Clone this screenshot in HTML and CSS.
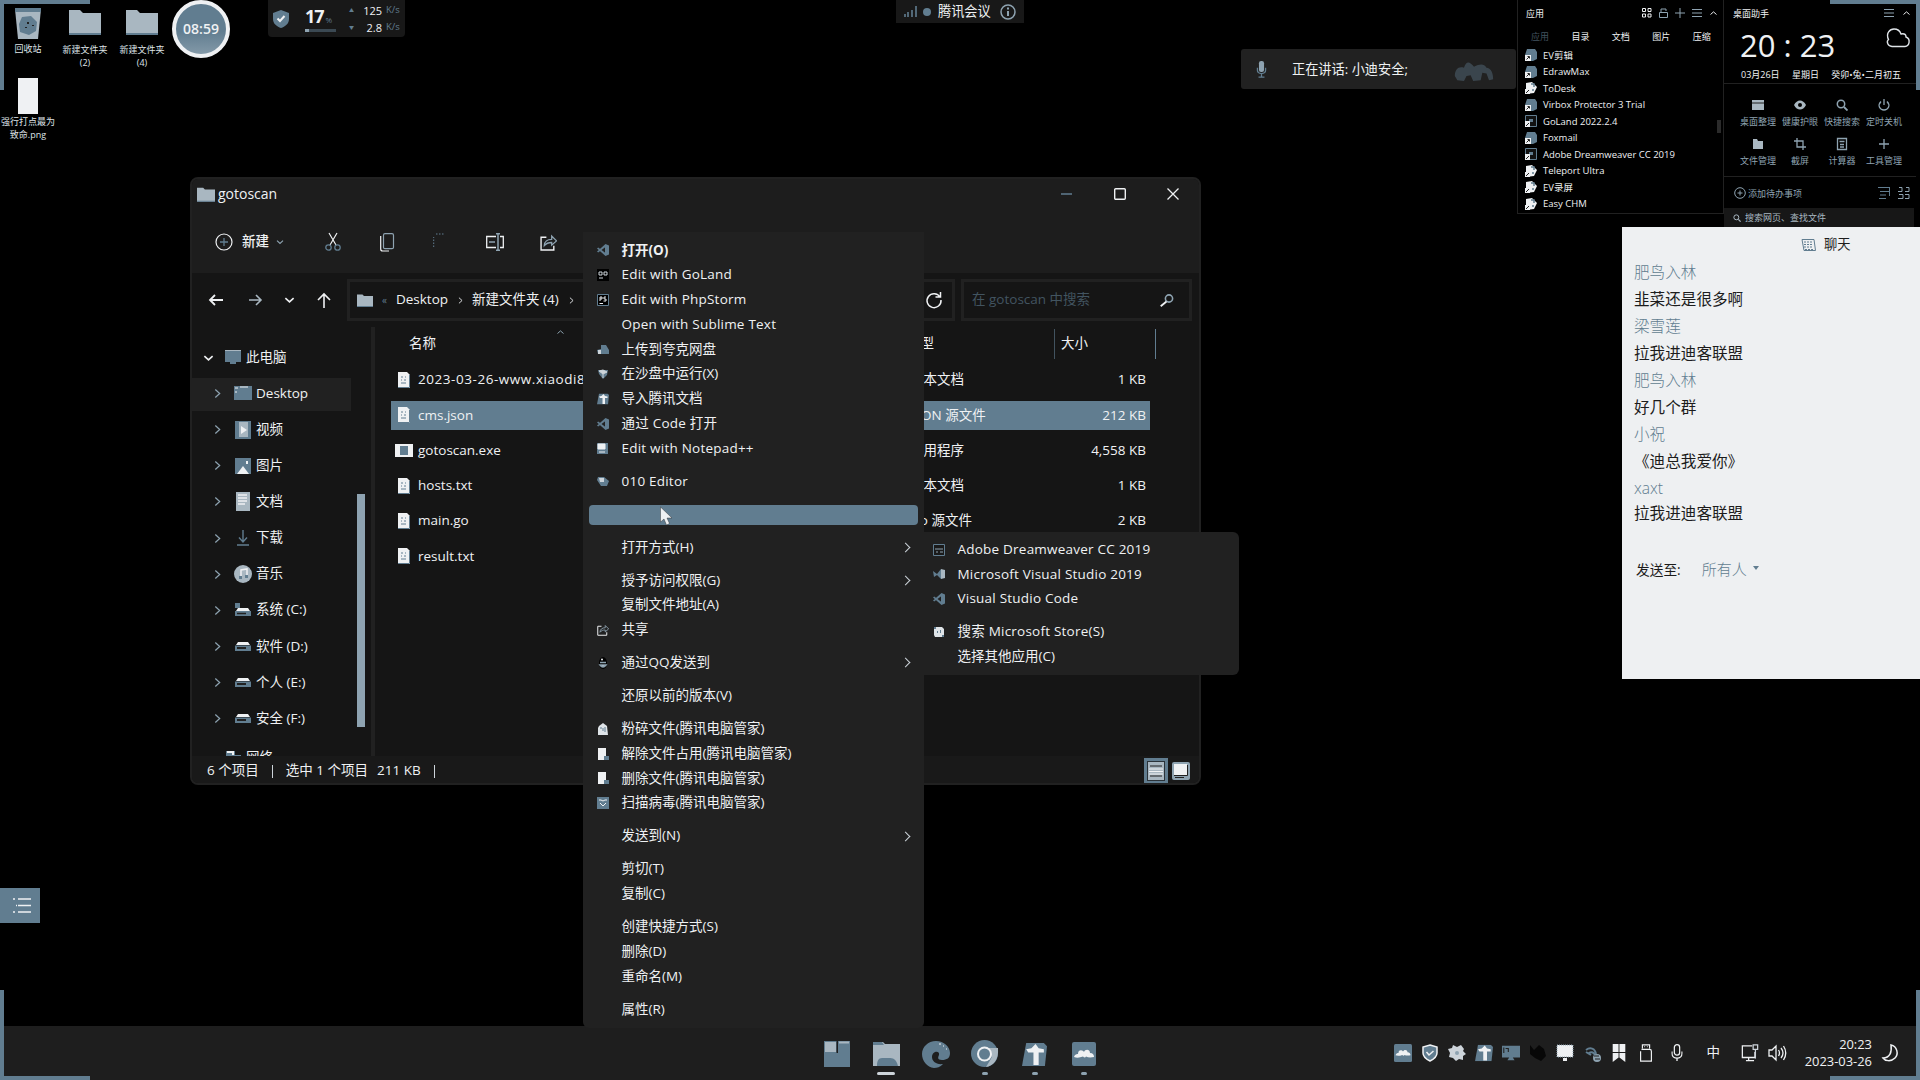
FILE: index.html
```html
<!DOCTYPE html>
<html lang="zh-CN">
<head>
<meta charset="utf-8">
<title>gotoscan</title>
<link rel="stylesheet" href="styles.css">
</head>
<body>
<svg class="defs" aria-hidden="true">
  <symbol id="folder" viewBox="0 0 32 26"><path d="M0 1h11l3 3h18v22H0z" fill="#a9b7c1"/><path d="M0 25h32" stroke="#617d90" stroke-width="2"/></symbol>
  <symbol id="chev" viewBox="0 0 8 12"><path d="M1.5 1.5 6.5 6l-5 4.500" fill="none" stroke="currentColor" stroke-width="1.400"/></symbol>
  <symbol id="down" viewBox="0 0 12 8"><path d="M1.500 2 6 6l4.500-4" fill="none" stroke="currentColor" stroke-width="1.800"/></symbol>
  <symbol id="up" viewBox="0 0 12 8"><path d="M2 6 6 2.500 10 6" fill="none" stroke="currentColor" stroke-width="1.300"/></symbol>
  <symbol id="shield" viewBox="0 0 16 18"><path d="M8 0 16 3v6c0 5-4 7.500-8 9-4-1.500-8-4-8-9V3z" fill="#617d90"/><path d="M4.500 8.500 7 11l4.500-5" fill="none" stroke="#eff1f3" stroke-width="2"/></symbol>
  <symbol id="doc" viewBox="0 0 12 16"><path d="M0 0h9l3 3v13H0z" fill="#eff1f3"/><path d="M11.500 3v12.500H0" fill="none" stroke="#617d90"/><path d="M3 5h2M7 5h1M3 8h1M6 8h2M3 11h5" stroke="#617d90"/></symbol>
  <symbol id="vs" viewBox="0 0 12 12"><path d="M8.500 0 12 1.500v9L8.500 12 0 4.500l1.200-1L8.500 9V3L1.200 8.500 0 7.500z" fill="#617d90"/><path d="M8 2h4v8H8z" fill="#617d90"/></symbol>
  <symbol id="share" viewBox="0 0 16 16"><path d="M6 3H1v12h12v-4" fill="none" stroke="#eff1f3" stroke-width="1.300"/><path d="M4 11c0-4 3-6 7-6V2l4.500 4.500L11 10.500V8C8 8 6 8.500 4 11z" fill="none" stroke="#8ea3b1" stroke-width="1.200"/></symbol>
  <symbol id="drive" viewBox="0 0 16 9"><path d="M3 0h10l2 3H1z" fill="#eff1f3"/><path d="M0 3.500h16V9H0z" fill="#617d90"/><path d="M2 6h9" stroke="#212121" stroke-width="2"/></symbol>
  <symbol id="plane" viewBox="0 0 24 22"><path d="M4 0h17l3 3-2 19H0z" fill="#617d90"/><path d="M4 6l5-1 4-4 3 4 5 1v3h-5v12h-5V9H6z" fill="#eff1f3"/></symbol>
  <symbol id="meeting" viewBox="0 0 24 24"><rect width="24" height="24" rx="2" fill="#617d90"/><path d="M2 15c1-3 3-3 4-3 0-5 5-4 6-2 1-3 6-3 6 1 3 0 4 2 4 4q-5 1-8-.5-1 2-3 0-5 2-9 .5z" fill="#eff1f3"/></symbol>
  <symbol id="mag" viewBox="0 0 12 12"><circle cx="5" cy="5" r="3.700" fill="none" stroke="currentColor" stroke-width="1.500"/><path d="m8 8 3.500 3.500" stroke="currentColor" stroke-width="1.800"/></symbol>
  <symbol id="mic" viewBox="0 0 12 19"><rect x="3.200" y=".7" width="5.600" height="11" rx="2.800" fill="none" stroke="currentColor" stroke-width="1.300"/><path d="M.7 8v2c0 6.500 10.600 6.500 10.600 0V8M6 15v3" fill="none" stroke="currentColor" stroke-width="1.400"/></symbol>
  <symbol id="filedoc" viewBox="0 0 12 12"><path d="M1 0h8v12H1z" fill="#eff1f3"/><path d="M7 8h5v4H7z" fill="#617d90"/></symbol>
  <symbol id="gear" viewBox="0 0 12 12"><path d="M3 1h6l2 2v7l-2 1H2l-1-2V3z" fill="#dfe4e8"/><path d="M1 1h2v2H1zM9 9h2v2H9zM4 5h1v2H4zM7 4h1v3H7z" fill="#617d90"/></symbol>
  <symbol id="app" viewBox="0 0 12 12"><path d="M2 0h8l2 3v7l-4 2H0V6z" fill="#617d90"/><path d="M0 6h6v6H0z" fill="#eff1f3"/><path d="M1.500 10.500 4 8M2.500 7.500h2v2" stroke="#212121" fill="none"/></symbol>
  <symbol id="appl" viewBox="0 0 12 12"><path d="M1 1 7 0l5 5-3 6-8 1z" fill="#eff1f3"/><path d="M6 2h3v3M7 8h2" stroke="#617d90" stroke-width="1.500" fill="none"/><path d="M0 7h5v5H0z" fill="#eff1f3"/><path d="M1 11 4 8" stroke="#212121"/></symbol>
  <symbol id="appd" viewBox="0 0 12 12"><path d="M.5.500h11v11H.5z" fill="#111" stroke="#617d90"/><path d="M4 4h4v3H4z" fill="#617d90"/><path d="M0 6h5v6H0z" fill="#eff1f3"/><path d="M1 11 4 8" stroke="#212121"/></symbol>
</svg>

<main class="desktop">
  <i class="corner tl"></i><i class="corner tr"></i><i class="corner bl"></i><i class="corner br"></i>

  <figure class="shortcut bin"><svg width="26" height="32" viewBox="0 0 26 32"><path d="M0 1h26l-3 30H3z" fill="#a9b7c1"/><path d="M0 0h26v4H0z" fill="#617d90"/><path d="M7 9l9-1 6 6-1 9-7 4-9-3-1-8z" fill="#617d90"/><path d="M12 14h2v2h-2zM17 17h2v1h-2zM10 19h2v1h-2z" fill="#212121"/></svg><figcaption>回收站</figcaption></figure>
  <figure class="shortcut f2"><svg width="32" height="26"><use href="#folder"/></svg><figcaption>新建文件夹<br>(2)</figcaption></figure>
  <figure class="shortcut f4"><svg width="32" height="26"><use href="#folder"/></svg><figcaption>新建文件夹<br>(4)</figcaption></figure>
  <figure class="shortcut png"><span class="thumb"></span><figcaption>强行打点最为<br>致命.png</figcaption></figure>
  <div class="timer">08:59</div>

  <section class="monitor">
    <svg width="16" height="18"><use href="#shield"/></svg>
    <div class="usage"><p><b>17</b><small>%</small></p><i></i></div>
    <div class="net"><p><em>▲</em><span>125</span><small>K/s</small></p><p><em>▼</em><span>2.8</span><small>K/s</small></p></div>
  </section>

  <section class="meetbar">
    <svg width="13" height="11" viewBox="0 0 13 11"><path d="M1 8v3M4 6v5M8 4v7M12 0v11" stroke="#617d90" stroke-width="1.600"/></svg>
    <i></i><span>腾讯会议</span>
    <svg width="16" height="16" viewBox="0 0 16 16"><circle cx="8" cy="8" r="7" fill="none" stroke="#8ea3b1" stroke-width="1.500"/><path d="M8 3.500v2M8 7v5" stroke="#8ea3b1" stroke-width="2"/></svg>
  </section>

  <section class="speaking">
    <svg class="steel" width="11" height="17" viewBox="0 0 11 20"><rect x="2.500" width="6" height="13" rx="2.500" fill="#8ea3b1"/><path d="M.7 8v3c0 5 9.600 5 9.600 0V8M5.500 15v4M2 19h7" fill="none" stroke="#617d90" stroke-width="1.500"/></svg>
    <span>正在讲话: 小迪安全;</span>
    <svg width="46" height="20" viewBox="0 0 46 24"><path d="M0 18c0-9 5-12 11-10 3-9 7-7 12-1 7-4 12-4 15 1 5 0 8 6 8 14l-5 1-3-8-5-1-2 9-9 1-3-7-5 1-3 6-8-1z" fill="#617d90" opacity=".4"/></svg>
  </section>

  <section class="apps">
    <header><span>应用</span>
      <svg width="10" height="10" viewBox="0 0 10 10"><path d="M.5.500h3v3h-3zM6 .500h3v3H6zM.5 6h3v3h-3zM6 6h3v3H6z" fill="none" stroke="#eff1f3"/></svg>
      <svg width="9" height="11" viewBox="0 0 9 11"><path d="M.5 4.500h8v5h-8zM2 4V1h5v2" fill="none" stroke="#8ea3b1"/></svg>
      <svg width="10" height="10" viewBox="0 0 10 10"><path d="M5 0v10M0 5h10" stroke="#8ea3b1"/></svg>
      <svg width="10" height="8" viewBox="0 0 10 8"><path d="M0 .500h10M0 4h10M0 7.500h10" stroke="#8ea3b1"/></svg>
      <svg width="9" height="6"><use href="#up"/></svg>
    </header>
    <nav><span class="dim">应用</span><span>目录</span><span>文档</span><span>图片</span><span>压缩</span></nav>
    <ul>
      <li><svg><use href="#app"/></svg>EV剪辑</li>
      <li><svg><use href="#app"/></svg>EdrawMax</li>
      <li><svg><use href="#appl"/></svg>ToDesk</li>
      <li><svg><use href="#app"/></svg>Virbox Protector 3 Trial</li>
      <li><svg><use href="#appd"/></svg>GoLand 2022.2.4</li>
      <li><svg><use href="#app"/></svg>Foxmail</li>
      <li><svg><use href="#appd"/></svg>Adobe Dreamweaver CC 2019</li>
      <li><svg><use href="#appl"/></svg>Teleport Ultra</li>
      <li><svg><use href="#appl"/></svg>EV录屏</li>
      <li><svg><use href="#appl"/></svg>Easy CHM</li>
    </ul>
    <i class="thumbbar"></i>
  </section>

  <section class="helper">
    <header><span>桌面助手</span>
      <svg width="10" height="8" viewBox="0 0 10 8"><path d="M0 .500h10M0 4h10M0 7.500h10" stroke="#8ea3b1"/></svg>
      <svg width="9" height="6"><use href="#up"/></svg>
    </header>
    <div class="clockrow"><span>20 : 23</span>
      <svg width="24" height="20" viewBox="0 0 24 20"><path d="M6 18.500C1 18 .5 13 2.500 11.500-.5 5 4 1 8 1c4 0 6 2 7 5 4-1 5 1 5 3 5 2 3.500 9-1 9.500z" fill="none" stroke="#dfe4e8" stroke-width="1.400"/></svg>
    </div>
    <div class="daterow"><span>03月26日</span><span>星期日</span><span>癸卯•兔•二月初五</span></div>
    <div class="tools">
      <div><svg viewBox="0 0 12 12"><path d="M0 1h12v10H0z" fill="#a9b7c1"/><path d="M0 4h12" stroke="#212121"/></svg>桌面整理</div>
      <div><svg viewBox="0 0 12 12"><path d="M0 6c3-6 9-6 12 0-3 6-9 6-12 0z" fill="#a9b7c1"/><circle cx="6" cy="6" r="2" fill="#000"/></svg>健康护眼</div>
      <div><svg viewBox="0 0 12 12"><use href="#mag"/></svg>快捷搜索</div>
      <div><svg viewBox="0 0 12 12"><path d="M6 0v6M3 2.500c-4 4-1 8.500 3 8.500s7-4.500 3-8.500" fill="none" stroke="#8ea3b1" stroke-width="1.300"/></svg>定时关机</div>
      <div><svg viewBox="0 0 12 12"><path d="M1 1h4l1 2h5v8H1z" fill="#a9b7c1"/></svg>文件管理</div>
      <div><svg viewBox="0 0 12 12"><path d="M3 0v9h9M0 3h9v9" fill="none" stroke="#8ea3b1" stroke-width="1.300"/></svg>截屏</div>
      <div><svg viewBox="0 0 12 12"><path d="M1.500.500h9v11h-9zM3.500 3.500h5M4 6.500h4M4 9h4" fill="none" stroke="#8ea3b1" stroke-width="1.300"/></svg>计算器</div>
      <div><svg viewBox="0 0 12 12"><path d="M6 1v10M1 6h10" stroke="#8ea3b1" stroke-width="1.300"/></svg>工具管理</div>
    </div>
    <div class="todo">
      <svg width="12" height="12" viewBox="0 0 12 12"><circle cx="6" cy="6" r="5.300" fill="none" stroke="#8ea3b1"/><path d="M6 3.500v5M3.500 6h5" stroke="#8ea3b1"/></svg>
      <span>添加待办事项</span>
      <svg width="12" height="12" viewBox="0 0 12 12"><path d="M0 .500h12M2 4.500h9M2 8h6M11.500 0v9M1 11.500h7" stroke="#617d90" fill="none"/></svg>
      <svg width="12" height="12" viewBox="0 0 12 12"><path d="M1 .500h3v4H0M8 .500h3v4H7M1 7.500h4v4H0M7 7.500h4v4H7" stroke="#8ea3b1" fill="none"/></svg>
    </div>
    <div class="find"><svg width="8" height="8"><use href="#mag"/></svg>搜索网页、查找文件</div>
  </section>

  <section class="chat">
    <header><svg width="15" height="13" viewBox="0 0 15 13"><path d="M1 .500h12l1.500 11H3z" fill="none" stroke="#617d90"/><path d="M3 3h9M3 5.500h9M3 8h9M4 10.500h8" stroke="#617d90" stroke-dasharray="2 1"/></svg>聊天</header>
    <dl>
      <dt>肥鸟入林</dt><dd>韭菜还是很多啊</dd>
      <dt>梁雪莲</dt><dd>拉我进迪客联盟</dd>
      <dt>肥鸟入林</dt><dd>好几个群</dd>
      <dt>小祝</dt><dd>《迪总我爱你》</dd>
      <dt>xaxt</dt><dd>拉我进迪客联盟</dd>
    </dl>
    <footer><span>发送至:</span><em>所有人</em><i></i></footer>
  </section>

  <section class="explorer">
    <header class="title"><svg width="18" height="15"><use href="#folder"/></svg><span>gotoscan</span>
      <div class="winbtns"><svg width="12" height="12" viewBox="0 0 12 12"><path d="M0 6h11" stroke="#617d90" stroke-width="1.500"/></svg><svg width="12" height="12" viewBox="0 0 12 12"><rect x=".7" y=".7" width="10.600" height="10.600" rx="1" fill="none" stroke="#eff1f3" stroke-width="1.400"/></svg><svg width="12" height="12" viewBox="0 0 12 12"><path d="m.5.500 11 11M11.500.500l-11 11" stroke="#eff1f3" stroke-width="1.300"/></svg></div>
    </header>
    <div class="toolbar">
      <svg width="18" height="18" viewBox="0 0 18 18"><circle cx="9" cy="9" r="8" fill="none" stroke="#eff1f3" stroke-width="1.200"/><path d="M9 5v8M5 9h8" stroke="#617d90" stroke-width="1.300"/></svg>
      <b>新建</b><svg class="steel" width="8" height="6"><use href="#down"/></svg>
      <svg class="cut" width="16" height="18" viewBox="0 0 16 18"><path d="M4 0l7 12M12 0 5 12" stroke="#eff1f3" stroke-width="1.200"/><g fill="none" stroke="#617d90" stroke-width="1.300"><circle cx="3.500" cy="14.500" r="2.700"/><circle cx="12.500" cy="14.500" r="2.700"/></g></svg>
      <svg class="copy" width="14" height="19" viewBox="0 0 14 19"><rect x="3.500" y=".7" width="10" height="15" rx="1.500" fill="none" stroke="#8ea3b1" stroke-width="1.200"/><path d="M.7 3v13q0 2 2 2H9" fill="none" stroke="#eff1f3" stroke-width="1.200"/></svg>
      <svg class="paste" width="12" height="18" viewBox="0 0 12 18"><path d="M.7 14V4M3 1h9" stroke="#617d90" stroke-dasharray="1.500 1.500"/></svg>
      <svg class="rename" width="18" height="18" viewBox="0 0 18 18"><path d="M10 3.500H.7v11H10M14 3.500h3.300v11H14" fill="none" stroke="#eff1f3" stroke-width="1.300"/><path d="M3 9h6M12 0v18M10 .700h4M10 17.300h4" stroke="#8ea3b1" stroke-width="1.500"/></svg>
      <svg class="shr" width="17" height="17"><use href="#share"/></svg>
    </div>
    <div class="navrow">
      <svg width="14" height="12" viewBox="0 0 14 12"><path d="M14 6H1M6 1 1 6l5 5" fill="none" stroke="#eff1f3" stroke-width="1.800"/></svg>
      <svg width="13" height="12" viewBox="0 0 13 12"><path d="M0 6h12M7 1l5 5-5 5" fill="none" stroke="#a9b7c1" stroke-width="1.600"/></svg>
      <svg width="11" height="8"><use href="#down"/></svg>
      <svg width="14" height="15" viewBox="0 0 14 15"><path d="M7 15V1M1 7l6-6 6 6" fill="none" stroke="#eff1f3" stroke-width="1.600"/></svg>
      <div class="address"><svg width="16" height="13"><use href="#folder"/></svg><em>«</em><span>Desktop</span><svg class="sep" width="5" height="9"><use href="#chev"/></svg><span>新建文件夹 (4)</span><svg class="sep" width="5" height="9"><use href="#chev"/></svg>
        <svg class="reload" width="16" height="16" viewBox="0 0 16 16"><path d="M14 5A7 7 0 1 0 15 8M14.500 0v5h-5" fill="none" stroke="#eff1f3" stroke-width="1.500"/></svg></div>
      <div class="search"><span>在 gotoscan 中搜索</span><svg width="14" height="13" viewBox="0 0 14 13"><circle cx="9" cy="4.500" r="3.600" fill="none" stroke="#8ea3b1" stroke-width="1.600"/><path d="M6.500 7.500.7 12.300" stroke="#eff1f3" stroke-width="1.800"/></svg></div>
    </div>
    <div class="content">
      <aside>
        <ul>
          <li class="root"><svg class="tw" width="11" height="8"><use href="#down"/></svg><svg width="16" height="15" viewBox="0 0 16 15"><path d="M0 0h16v12H0zM5 12h6v2H5z" fill="#617d90"/><path d="M0 .500h16" stroke="#a9b7c1"/></svg>此电脑</li>
          <li class="on"><svg class="tw" width="7" height="11"><use href="#chev"/></svg><svg width="18" height="15" viewBox="0 0 18 15"><path d="M0 0h18v14H0z" fill="#617d90"/><path d="M1 2h3M1 6h2M6 1h8" stroke="#eff1f3"/></svg>Desktop</li>
          <li><svg class="tw" width="7" height="11"><use href="#chev"/></svg><svg width="18" height="18" viewBox="0 0 18 18"><path d="M1 0h16v18H1z" fill="#617d90"/><path d="M5 1h9v15H5z" fill="#a9b7c1"/><path d="M7 5l6 4-6 4z" fill="#eff1f3"/></svg>视频</li>
          <li><svg class="tw" width="7" height="11"><use href="#chev"/></svg><svg width="18" height="16" viewBox="0 0 18 16"><path d="M1 0h16v16H1z" fill="#617d90"/><path d="m3 16 6-8 6 8zM12 3h2v3h-2z" fill="#eff1f3"/></svg>图片</li>
          <li><svg class="tw" width="7" height="11"><use href="#chev"/></svg><svg width="18" height="19" viewBox="0 0 18 19"><path d="M2 0h14v19H2z" fill="#a9b7c1"/><path d="M4 3h9M4 6h9M4 9h9M4 12h7" stroke="#eff1f3" stroke-width="1.500"/></svg>文档</li>
          <li><svg class="tw" width="7" height="11"><use href="#chev"/></svg><svg width="18" height="16" viewBox="0 0 18 16"><path d="M9 0v11M5 7.500 9 12l4-4.500M3 15h12" fill="none" stroke="#617d90" stroke-width="1.400"/></svg>下载</li>
          <li><svg class="tw" width="7" height="11"><use href="#chev"/></svg><svg width="18" height="18" viewBox="0 0 18 18"><circle cx="9" cy="9" r="9" fill="#a9b7c1"/><path d="M7 12V5l6-1v7" fill="none" stroke="#eff1f3" stroke-width="1.500"/><path d="M5 11h3v3H5zM11 10h3v3h-3z" fill="#617d90"/></svg>音乐</li>
          <li><svg class="tw" width="7" height="11"><use href="#chev"/></svg><svg width="18" height="14" viewBox="0 0 18 14"><path d="M1 0h5v5H1z" fill="#617d90"/><path d="M4 5h10l2 3H2z" fill="#eff1f3"/><path d="M1 8h16v5H1z" fill="#617d90"/><path d="M3 10.500h9" stroke="#212121" stroke-width="1.500"/></svg>系统 (C:)</li>
          <li><svg class="tw" width="7" height="11"><use href="#chev"/></svg><svg width="18" height="9"><use href="#drive"/></svg>软件 (D:)</li>
          <li><svg class="tw" width="7" height="11"><use href="#chev"/></svg><svg width="18" height="9"><use href="#drive"/></svg>个人 (E:)</li>
          <li><svg class="tw" width="7" height="11"><use href="#chev"/></svg><svg width="18" height="9"><use href="#drive"/></svg>安全 (F:)</li>
          <li class="root lan"><svg class="tw" width="11" height="8"></svg><svg width="16" height="15" viewBox="0 0 16 15"><path d="M1 0h9v6H1zM8 4h8v9H8z" fill="#617d90"/><path d="M2 1h6v3" stroke="#eff1f3" fill="none" stroke-width="2"/></svg>网络</li>
        </ul>
        <i class="scroll"></i>
      </aside>
      <div class="files">
        <div class="cols"><span>名称</span><svg width="9" height="6"><use href="#up"/></svg><span class="ctype">类型</span><span class="csize">大小</span></div>
        <div class="row wide"><svg><use href="#doc"/></svg><span>2023-03-26-www.xiaodi8.com</span><span>文本文档</span><span>1 KB</span></div>
        <div class="row sel"><svg><use href="#doc"/></svg><span>cms.json</span><span>JSON 源文件</span><span>212 KB</span></div>
        <div class="row"><svg viewBox="0 0 18 14"><path d="M0 0h18v13H0z" fill="#eff1f3"/><path d="M5 2h8v9H5z" fill="#617d90"/></svg><span>gotoscan.exe</span><span>应用程序</span><span>4,558 KB</span></div>
        <div class="row"><svg><use href="#doc"/></svg><span>hosts.txt</span><span>文本文档</span><span>1 KB</span></div>
        <div class="row"><svg><use href="#doc"/></svg><span>main.go</span><span>Go 源文件</span><span>2 KB</span></div>
        <div class="row"><svg><use href="#doc"/></svg><span>result.txt</span><span></span><span></span></div>
      </div>
    </div>
    <footer class="status"><span>6 个项目</span><i></i><span>选中 1 个项目</span><span class="kb">211 KB</span><i></i>
      <div class="views"><b><svg width="18" height="18" viewBox="0 0 18 18"><path d="M1 0h16v18H1z" fill="#a9b7c1"/><path d="M3 4h12M3 14h12" stroke="#212121"/><path d="M2 7h14M2 9.500h14M2 12h14" stroke="#eff1f3"/></svg></b><svg width="18" height="18" viewBox="0 0 18 18"><rect width="18" height="18" rx="2" fill="#8ea3b1"/><path d="M2 2h13v11H2z" fill="#eff1f3"/><path d="M2 13.500h13.500V3M3 15.500h9" stroke="#212121" fill="none"/></svg></div>
    </footer>
  </section>

  <footer class="taskbar">
    <div class="pins">
      <span><svg width="26" height="26" viewBox="0 0 26 26"><path d="M0 0h12.500v12H0zM14 0h12v12H14zM0 12H26V26H0z" fill="#617d90"/><path d="M1 1h11v10H1z" fill="#a9b7c1"/><path d="M15 1.500h10" stroke="#a9b7c1" stroke-width="2"/></svg></span>
      <span class="active"><svg width="27" height="24" viewBox="0 0 27 24"><path d="M0 0h10l2 2h15v22H0z" fill="#a9b7c1"/><path d="M0 0h9l2 3H0z" fill="#617d90"/><path d="M4 24c0-9 4-8 9-8s10-1 12 8z" fill="#617d90"/></svg></span>
      <span><svg width="28" height="27" viewBox="0 0 28 27"><path d="M14 0c8 0 14 6 14 12 0 5-3 7-8 7-5 0-4-3-3-5 1-5-7-4-7 2 0 4 4 8 11 7-3 3-6 4-9 4C5 26 0 20 0 13 0 6 6 0 14 0z" fill="#617d90"/><path d="M17 3h2M21 5h1M24 8h1" stroke="#eff1f3"/></svg></span>
      <span class="run"><svg width="28" height="28" viewBox="0 0 28 28"><circle cx="13.500" cy="13.500" r="13.500" fill="#617d90"/><path d="M15 8h12c1 12-5 18-12 19l6-10z" fill="#a9b7c1"/><circle cx="13.500" cy="14" r="7.500" fill="#eff1f3"/><circle cx="13.500" cy="14" r="5.500" fill="#617d90"/></svg></span>
      <span class="run"><svg width="25" height="23"><use href="#plane"/></svg></span>
      <span class="run"><svg width="24" height="24"><use href="#meeting"/></svg></span>
    </div>
    <div class="tray">
      <svg viewBox="0 0 24 24"><use href="#meeting"/></svg>
      <svg viewBox="0 0 16 18"><path d="M8 1 15 3v6c0 4-3 6-7 8-4-2-7-4-7-8V3z" fill="#617d90" stroke="#eff1f3" stroke-width="1.500"/><path d="M4.500 8 7 11l4.500-4" fill="none" stroke="#eff1f3" stroke-width="1.500"/></svg>
      <svg viewBox="0 0 18 18"><path d="M5 1l4 2 4-2 3 4-1 2 3 3-3 2v4l-4-1-3 2-3-3-4-1 1-4-2-4 4-1z" fill="#cdd4da"/><circle cx="9" cy="9" r="2" fill="#8ea3b1"/></svg>
      <svg viewBox="0 0 24 22"><use href="#plane"/></svg>
      <svg viewBox="0 0 20 18"><path d="M0 1h20v13h-8l2 3H6l2-3H0z" fill="#617d90"/><path d="M2 3v6M4 4h3v4" stroke="#212121" stroke-width="1.200" fill="none"/></svg>
      <svg viewBox="0 0 18 18"><path d="M1 1l4 5 5-5 5 4 2 7-5 5-6-3-5-4z" fill="#070707"/></svg>
      <svg class="screen" viewBox="0 0 18 18"><path d="M1 1h16v12H1zM7 14h4v3H7z" fill="#eff1f3"/><path d="M1 1h16v12H1z" fill="none" stroke="#8ea3b1" stroke-dasharray="1 1"/></svg>
      <svg class="wasp" viewBox="0 0 18 18"><path d="M1 6c4-3 9-2 10 4M4 9c3-2 5 0 6 2M1 8l5 3" fill="none" stroke="#617d90" stroke-width="2"/><circle cx="12" cy="14" r="4" fill="#8ea3b1"/><path d="M9 12h5M10 15h5" stroke="#212121"/></svg>
      <svg viewBox="0 0 16 20"><path d="M1 0h6.500v9H1zM8.500 0H15v9H8.500zM1 10h6.500v5L1 20zM8.500 10H15v10l-6.500-5z" fill="#eff1f3"/></svg>
      <svg class="usb" viewBox="0 0 16 20"><path d="M4 5V1h8v4M3 6h9q2 0 2 2v11H2V8" fill="none" stroke="#eff1f3" stroke-width="1.300"/><path d="M6 3h1M9 3h1" stroke="#eff1f3"/></svg>
      <svg viewBox="0 0 12 19"><use href="#mic"/></svg>
      <em>中</em>
      <svg class="pc" viewBox="0 0 19 20"><path d="M12 2H1v13h14V9M5 18.500h9M8 15v3" fill="none" stroke="#eff1f3" stroke-width="1.400"/><path d="M13 1h5v5h-5zM15.500 6v10" fill="none" stroke="#cdd4da" stroke-width="1.400"/></svg>
      <svg viewBox="0 0 18 16"><path d="M1 5h3l4-4v14l-4-4H1zM10.500 5q2 3 0 6M13 3q4 5 0 10M15.500 1q4.500 7 0 14" fill="none" stroke="#eff1f3" stroke-width="1.300"/></svg>
      <time>20:23<br>2023-03-26</time>
      <svg class="moon" viewBox="0 0 16 18"><path d="M9 1c6 1 8 9 4 13-4 4-10 3-12 0 7 0 9-6 8-13z" fill="none" stroke="#eff1f3" stroke-width="1.500"/></svg>
    </div>
  </footer>

  <button class="sidebtn"><svg width="18" height="15" viewBox="0 0 18 15"><path d="M0 1h2M5 1h13M5 7.500h13M3 7.500h1M0 14h2M5 14h13" stroke="#eff1f3" stroke-width="1.500"/></svg></button>

  <menu class="ctx">
    <li class="bold"><svg><use href="#vs"/></svg>打开(O)</li>
    <li class="latin"><svg viewBox="0 0 12 12"><path d="M0 0h12v12H0z" fill="#000"/><path d="M2 3h3v3H2zM7 3h3v3H7zM2 9h4" fill="none" stroke="#cdd4da"/></svg>Edit with GoLand</li>
    <li class="latin"><svg viewBox="0 0 12 12"><path d="M.5.500h11v11H.5z" fill="#000" stroke="#617d90"/><path d="M3 7V3h2v2H3M9 3H7v2h2v2H6.500M2.500 9.500H6" fill="none" stroke="#eff1f3"/></svg>Edit with PhpStorm</li>
    <li class="latin"><svg></svg>Open with Sublime Text</li>
    <li><svg viewBox="0 0 12 12"><path d="M4 2h5l3 5v4H1L0 7l4-1z" fill="#617d90"/><path d="M1 7h3v4H1z" fill="#cdd4da"/></svg>上传到夸克网盘</li>
    <li><svg viewBox="0 0 12 12"><path d="M1 2h10l-1 5-4 4-4-5z" fill="#617d90"/><path d="M2 3 6 2l4 2-4 2zM6 6v4" fill="#cdd4da" stroke="#cdd4da"/></svg>在沙盘中运行(X)</li>
    <li><svg viewBox="0 0 24 22"><use href="#plane"/></svg>导入腾讯文档</li>
    <li class="latin"><svg><use href="#vs"/></svg>通过 Code 打开</li>
    <li class="latin"><svg viewBox="0 0 12 12"><path d="M0 1h11v11H0z" fill="#617d90"/><path d="M1 2h7v5H1zM2 10h6" fill="#eff1f3" stroke="#eff1f3"/></svg>Edit with Notepad++</li>
    <li class="gap latin"><svg viewBox="0 0 12 12"><path d="M1 2h6l5 4-2 5H4L0 5z" fill="#617d90"/><path d="M2 3h5v4H3z" fill="#cdd4da"/></svg>010 Editor</li>
    <li class="gap hot"></li>
    <li class="gap sub"><svg></svg>打开方式(H)</li>
    <li class="gap sub"><svg></svg>授予访问权限(G)</li>
    <li><svg></svg>复制文件地址(A)</li>
    <li><svg viewBox="0 0 16 16"><use href="#share"/></svg>共享</li>
    <li class="gap sub"><svg viewBox="0 0 12 12"><ellipse cx="6" cy="6" rx="4" ry="6" fill="#000"/><circle cx="5" cy="2.500" r="1" fill="#eff1f3"/><path d="M3 5.500h6M3 8q3 4 6 0z" stroke="#8ea3b1" stroke-width="1.500" fill="#eff1f3"/></svg>通过QQ发送到</li>
    <li class="gap"><svg></svg>还原以前的版本(V)</li>
    <li class="gap"><svg viewBox="0 0 12 12"><path d="M2 3l4-3 4 3 1 9H1V5z" fill="#dfe4e8"/><path d="M4 4v2M6 5v3M8 4v5" stroke="#617d90"/></svg>粉碎文件(腾讯电脑管家)</li>
    <li><svg><use href="#filedoc"/></svg>解除文件占用(腾讯电脑管家)</li>
    <li><svg><use href="#filedoc"/></svg>删除文件(腾讯电脑管家)</li>
    <li><svg viewBox="0 0 12 12"><path d="M0 0h12v12H0z" fill="#617d90"/><path d="M2 3h2l2 1 2-1h2M3 6l3 3 3-3" stroke="#eff1f3" fill="none"/></svg>扫描病毒(腾讯电脑管家)</li>
    <li class="gap sub"><svg></svg>发送到(N)</li>
    <li class="gap"><svg></svg>剪切(T)</li>
    <li><svg></svg>复制(C)</li>
    <li class="gap"><svg></svg>创建快捷方式(S)</li>
    <li><svg></svg>删除(D)</li>
    <li><svg></svg>重命名(M)</li>
    <li class="gap"><svg></svg>属性(R)</li>
  </menu>

  <menu class="ctx openwith">
    <li class="latin"><svg viewBox="0 0 12 12"><path d="M.5.500h11v11H.5z" fill="#1a1a1a" stroke="#617d90"/><path d="M2 5h8M3 8h2M7 8h3" stroke="#8ea3b1"/></svg>Adobe Dreamweaver CC 2019</li>
    <li class="latin"><svg viewBox="0 0 12 12"><path d="M0 3l4 3 4-5v10L4 7 1 9z" fill="#617d90"/><path d="M8 1l4 1v8l-4 1z" fill="#a9b7c1"/></svg>Microsoft Visual Studio 2019</li>
    <li class="latin"><svg><use href="#vs"/></svg>Visual Studio Code</li>
    <li class="gap latin"><svg><use href="#gear"/></svg>搜索 Microsoft Store(S)</li>
    <li><svg></svg>选择其他应用(C)</li>
  </menu>

  <svg class="cursor" width="13" height="19" viewBox="0 0 13 19"><path d="M.5 0v15l3.500-3 2.500 6 3-1.500L7 11h5z" fill="#eff1f3" stroke="#212121" stroke-width=".4"/></svg>
</main>
</body>
</html>
```
FILE: styles.css
```css
:root {
  --panel: #212121;
  --steel: #617d90;
  --light: #eff1f3;
  --body: #151515;
}
* { box-sizing: border-box; margin: 0; padding: 0; }
body {
  background: #000;
  color: var(--light);
  font: 13.5px/1 "Open Sans", "Noto Sans CJK SC", sans-serif;
  overflow: hidden;
}
ul, menu { list-style: none; }
em, i { font-style: normal; }
svg { display: block; flex: none; overflow: visible; }
svg.defs { display: none; }
.steel { color: #8ea3b1; }
.desktop { position: relative; width: 1920px; height: 1080px; overflow: hidden; white-space: nowrap; }
.desktop > section, .desktop > figure, .desktop > menu, .timer, .cursor, .sidebtn, .taskbar, .corner { position: absolute; }

.corner { width: 90px; height: 90px; border: 0 solid var(--steel); z-index: 5; }
.tl { left: 0; top: 0; border-width: 4px 0 0 4px; }
.tr { right: 0; top: 0; border-width: 4px 4px 0 0; }
.bl { left: 0; bottom: 0; border-width: 0 0 4px 4px; }
.br { right: 0; bottom: 0; border-width: 0 4px 4px 0; }

.shortcut { display: flex; flex-direction: column; align-items: center; width: 60px; font-size: 9px; line-height: 13px; text-align: center; color: #dfe4e8; }
.shortcut svg { margin-bottom: 8px; }
.bin { left: -2px; top: 8px; }
.bin svg { margin-bottom: 2px; }
.f2 { left: 55px; top: 9px; }
.f4 { left: 112px; top: 9px; }
.png { left: -2px; top: 78px; }
.thumb { width: 20px; height: 36px; background: var(--light); margin-bottom: 1px; }
.timer {
  left: 172px; top: 0; width: 58px; height: 58px; border-radius: 50%;
  border: 4px solid var(--light); background: linear-gradient(#617d90 55%, #8399a8);
  display: flex; align-items: center; justify-content: center; font-size: 14px; font-weight: 600;
}

.monitor { left: 268px; top: 0; width: 137px; height: 37px; background: #181818; display: flex; align-items: center; padding-left: 5px; border-radius: 0 0 4px 4px; }
.usage { width: 31px; margin-left: 16px; }
.usage p { display: flex; align-items: baseline; height: 20px; }
.usage b { font-size: 18px; line-height: 20px; letter-spacing: -1px; }
.usage small { font-size: 8px; color: var(--steel); margin-left: 2px; }
.usage i { display: block; height: 3px; margin-top: 3px; background: linear-gradient(90deg, #8ea3b1 12%, #3b4953 12%); }
.net { margin-left: 13px; }
.net p { display: flex; align-items: center; height: 17px; font-size: 11px; }
.net em { font-size: 5px; color: var(--steel); width: 6px; }
.net span { width: 27px; text-align: right; }
.net small { font-size: 9.5px; color: var(--steel); margin-left: 4px; }

.meetbar { left: 896px; top: 0; width: 128px; height: 23px; background: #181818; display: flex; align-items: center; padding-left: 8px; font-size: 13.2px; }
.meetbar i { width: 8px; height: 8px; border-radius: 50%; background: var(--steel); margin: 0 7px 0 6px; }
.meetbar span { width: 54px; margin-right: 8px; }

.speaking { left: 1241px; top: 49px; width: 275px; height: 40px; border-radius: 3px; background: var(--panel); display: flex; align-items: center; padding-left: 15px; font-size: 13.2px; }
.speaking span { width: 158px; padding-left: 25px; margin-right: 26px; flex: none; padding-top: 1px; }
.speaking svg:last-child { margin-top: 4px; }

.apps { left: 1517px; top: 0; width: 207px; height: 214px; border: solid #212121; border-width: 0 1px 1px; background: #000; }
.apps header { display: flex; align-items: center; height: 26px; padding: 0 5px 0 8px; font-size: 9px; gap: 7px; }
.apps header span { flex: 1; }
.apps nav { display: flex; height: 21px; align-items: center; font-size: 9px; padding-left: 13px; gap: 22.4px; }
.apps .dim { color: #42535f; }
.apps li { display: flex; align-items: center; height: 16.5px; padding-left: 7px; font-size: 9.5px; }
.apps li svg { width: 12px; height: 12px; margin-right: 6px; }
.thumbbar { position: absolute; right: 2px; top: 120px; width: 4px; height: 13px; background: #2b2b2b; }

.helper { left: 1724px; top: 0; width: 192px; height: 227px; background: #000; font-size: 9px; }
.helper header { display: flex; align-items: center; height: 26px; padding: 0 5px 0 9px; gap: 8px; }
.helper header span { flex: 1; }
.clockrow { display: flex; justify-content: space-between; height: 40px; padding: 0 6px 0 16px; font-size: 31px; line-height: 38px; }
.clockrow svg { margin-top: 2px; }
.daterow { display: flex; justify-content: space-between; align-items: center; height: 18px; padding: 0 15px 1px 17px; border-bottom: 1px solid #212121; }
.tools { display: grid; grid-template-columns: repeat(4, 42px); padding: 15px 0 0 13px; height: 93px; border-bottom: 1px solid #212121; color: #8ea3b1; }
.tools div { display: flex; flex-direction: column; align-items: center; gap: 6px; height: 37px; }
.tools svg { width: 12px; height: 12px; }
.todo { display: flex; align-items: center; height: 31px; padding: 1px 6px 0 10px; gap: 2px; color: #8ea3b1; }
.todo span { flex: 1; }
.todo svg:last-child { margin-left: 6px; }
.find { display: flex; align-items: center; height: 19px; background: #171717; padding-left: 9px; gap: 4px; color: #a9b7c1; margin-right: 2px; }

.chat { left: 1622px; top: 227px; width: 298px; height: 452px; background: #eef0f2; color: #1c1c1c; padding-top: 8px; }
.chat header { display: flex; gap: 8px; align-items: center; height: 20px; padding-left: 179px; font-size: 13.3px; }
.chat dl { padding: 3.500px 0 0 12px; font-size: 15.6px; font-weight: 300; }
.chat dt, .chat dd { height: 27px; line-height: 27px; }
.chat dd { font-weight: 400; }
.chat dd:last-child { margin-top: -2px; }
.chat dt { color: var(--steel); }
.chat footer { display: flex; align-items: center; height: 24px; margin: 31px 0 0 14px; font-size: 13.7px; }
.chat footer em { color: var(--steel); font-size: 15px; margin-left: 21px; font-weight: 300; }
.chat footer i { border: 3px solid transparent; border-top: 4px solid var(--steel); margin-left: 6px; }

.explorer { left: 190px; top: 177px; width: 1011px; height: 608px; background: var(--body); border: 2px solid var(--panel); border-radius: 8px; display: flex; flex-direction: column; overflow: hidden; }
.title { display: flex; align-items: center; height: 28px; flex: none; background: #1d1d1d; padding: 2px 20px 0 5px; font-size: 14px; }
.title span { flex: 1; padding-left: 3px; }
.winbtns { display: flex; gap: 41px; }
.toolbar { display: flex; align-items: center; height: 66px; flex: none; background: #1d1d1d; padding: 4px 0 0 23px; }
.toolbar b { font-weight: 500; margin: 0 7px 0 9px; }
.cut { margin-left: 41px; }
.copy { margin-left: 39px; }
.paste { margin-left: 39px; }
.rename { margin-left: 41px; }
.shr { margin-left: 36px; }
.navrow { display: flex; align-items: center; height: 54px; padding-left: 17px; flex: none; }
.navrow > svg:nth-child(2) { margin-left: 26px; }
.navrow > svg:nth-child(3) { margin-left: 22px; }
.navrow > svg:nth-child(4) { margin-left: 22px; }
.address { display: flex; align-items: center; width: 608px; height: 42px; border: 3px solid var(--panel); margin-left: 16px; padding-left: 7px; }
.address em { color: var(--steel); margin: 0 9px 0 9px; font-size: 10px; }
.address .sep { margin: 0 9px 0 10px; }
.reload { margin-left: auto; margin-right: 10px; }
.search { display: flex; align-items: center; justify-content: space-between; width: 231px; height: 42px; border: 3px solid var(--panel); margin-left: 6px; padding: 0 15px 0 8px; color: #425460; }
.content { display: flex; height: 429px; flex: none; overflow: hidden; }
aside { position: relative; width: 183px; border-right: 4px solid var(--panel); padding: 12.500px 0 0 0; height: 429px; overflow: hidden; }
aside li { display: flex; align-items: center; height: 36.100px; padding-left: 22px; }
aside li.on { background: linear-gradient(#212121, #212121) 0 2px / 159px 33px no-repeat; }
aside li .tw { color: #8ea3b1; margin-right: 13px; }
aside li svg + svg { margin-right: 4px; }
aside .root { padding-left: 11px; }
aside .root .tw { color: var(--light); margin-right: 11px; }
aside .root svg + svg { margin-right: 5px; }
aside .lan { align-items: flex-start; padding-top: 14px; }
.scroll { position: absolute; right: 6px; top: 167px; width: 8px; height: 233px; background: #8ea3b1; }
.files { flex: 1; padding-left: 16px; }
.cols { display: flex; align-items: center; height: 36px; margin-top: -1px; padding-left: 18px; }
.cols svg { margin: -24px 0 0 120px; color: #8ea3b1; }
.ctype { margin-left: 342px; width: 148px; padding: 8px 0; border-right: 1px solid #42535f; }
.csize { width: 101px; padding: 8px 0 8px 6px; border-right: 1px solid var(--steel); }
.row { display: grid; grid-template-columns: 18px 497px 1fr auto; align-items: center; width: 759px; height: 29px; margin-bottom: 6.250px; padding: 0 4px 0 4px; }
.cols + .row { margin-top: 3.500px; }
.row svg { width: 18px; height: 16px; }
.row span:nth-of-type(1) { padding-left: 5px; }
.row.wide span:nth-of-type(1) { letter-spacing: .55px; }
.row.sel { background: var(--steel); }
.status { display: flex; align-items: center; flex: 1; padding: 2px 9px 0 15px; background: #191919; }
.status > i { width: 1px; height: 13px; background: #cdd4da; margin: 0 13px; }
.status .kb { margin-left: 9px; }
.views { display: flex; align-items: center; gap: 4px; margin-left: auto; }
.views b { width: 24px; height: 26px; background: #2b3339; border: 3px solid var(--steel); display: flex; align-items: center; justify-content: center; }

.taskbar { left: 0; top: 1026px; width: 1920px; height: 54px; background: #1e1e1e; }
.pins { position: absolute; left: 812px; top: 0; height: 54px; display: flex; }
.pins span { position: relative; width: 49.500px; height: 56px; display: flex; align-items: center; justify-content: center; }
.pins .run::after, .pins .active::after { content: ""; position: absolute; bottom: 7px; width: 6px; height: 3px; border-radius: 2px; background: #8ea3b1; }
.pins .active::after { width: 18px; background: #cdd4da; }
.tray { display: flex; align-items: center; justify-content: flex-end; height: 54px; padding-right: 22px; }
.tray > svg { width: 18px; height: 18px; margin-right: 9px; }
.tray > .screen { margin-right: 11px; }
.tray > .wasp { margin-right: 7px; }
.tray > .usb { margin-right: 13px; }
.tray > em { font-size: 13.5px; margin: 0 21px 0 12px; }
.tray > time { font-size: 12.9px; line-height: 17.5px; text-align: right; margin: 0 10px 0 1px; width: 76px; }
.tray > .moon { margin-right: 0; width: 16px; }

.sidebtn { left: 0; top: 888px; width: 40px; height: 35px; border: 0; background: var(--steel); display: flex; align-items: center; justify-content: center; padding-left: 3px; }

.ctx { left: 583px; top: 232px; width: 341px; height: 796px; background: var(--panel); border-radius: 0 0 6px 6px; padding: 6px 6px 0; }
.ctx li { position: relative; display: flex; align-items: center; height: 24.750px; padding-left: 8px; }
.ctx li > svg { width: 12px; height: 12px; margin-right: 12.500px; }
.ctx .bold { font-weight: 700; }
.ctx .latin { letter-spacing: .22px; }
.ctx .gap { margin-top: 8.250px; }
.ctx .hot::before { content: ""; position: absolute; inset: 3px 0 2px 0; border-radius: 4px; background: var(--steel); }
.ctx .sub::after { content: ""; position: absolute; right: 9px; width: 6px; height: 6px; border: solid #cdd4da; border-width: 1.300px 1.300px 0 0; transform: rotate(45deg); }
.openwith { left: 924px; top: 532px; width: 315px; height: 143px; border-radius: 0 6px 6px 0; padding-top: 5.200px; padding-left: 1px; }
.cursor { left: 660px; top: 507px; }
```
